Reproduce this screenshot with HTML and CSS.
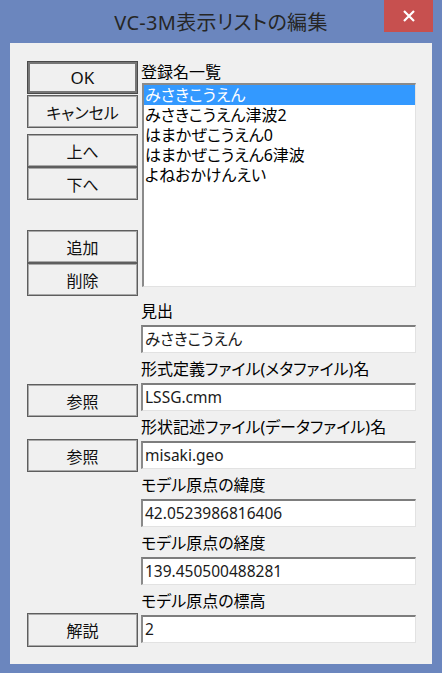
FILE: index.html
```html
<!DOCTYPE html>
<html lang="ja">
<head>
<meta charset="utf-8">
<title>VC-3M表示リストの編集</title>
<link rel="stylesheet" href="styles.css">
</head>
<body>
<div class="window">
  <div class="titlebar">
    <div class="title">VC-3M表示リストの編集</div>
    <div class="close">
      <svg width="12" height="12" viewBox="0 0 12 12"><path d="M1 1 L11 11 M11 1 L1 11" stroke="#fff" stroke-width="2.2" fill="none"/></svg>
    </div>
  </div>
  <div class="client">
    <div class="buttons">
      <div class="btn btn-default">OK</div>
      <div class="btn btn-cancel">キャンセル</div>
      <div class="btn btn-up">上へ</div>
      <div class="btn">下へ</div>
      <div class="btn btn-add">追加</div>
      <div class="btn">削除</div>
      <div class="btn btn-ref1">参照</div>
      <div class="btn btn-ref2">参照</div>
      <div class="btn btn-help">解説</div>
    </div>
    <div class="fields">
      <div class="label label-first">登録名一覧</div>
      <div class="listbox">
        <div class="item selected">みさきこうえん</div>
        <div class="item">みさきこうえん津波2</div>
        <div class="item">はまかぜこうえん0</div>
        <div class="item">はまかぜこうえん6津波</div>
        <div class="item">よねおかけんえい</div>
      </div>
      <div class="label label-after-list">見出</div>
      <div class="input">みさきこうえん</div>
      <div class="label">形式定義ファイル(メタファイル)名</div>
      <div class="input">LSSG.cmm</div>
      <div class="label">形状記述ファイル(データファイル)名</div>
      <div class="input">misaki.geo</div>
      <div class="label">モデル原点の緯度</div>
      <div class="input">42.0523986816406</div>
      <div class="label">モデル原点の経度</div>
      <div class="input">139.450500488281</div>
      <div class="label">モデル原点の標高</div>
      <div class="input">2</div>
    </div>
  </div>
</div>
</body>
</html>
```

FILE: styles.css
```css
html, body {
  margin: 0;
  padding: 0;
}
body {
  width: 442px;
  height: 673px;
  background: #6b86be;
  font-family: "Noto Sans", "Noto Sans CJK JP", sans-serif;
  font-feature-settings: "palt";
  color: #000;
  overflow: hidden;
}
.window {
  width: 442px;
  height: 673px;
  display: flex;
  flex-direction: column;
}
.titlebar {
  height: 43px;
  display: flex;
  align-items: flex-start;
  padding-left: 58px;
  padding-right: 9px;
  box-sizing: border-box;
}
.title {
  flex: 1;
  text-align: center;
  font-size: 20px;
  line-height: 24px;
  padding-top: 11px;
  color: #262626;
  letter-spacing: 0.3px;
}
.close {
  width: 49px;
  height: 32px;
  background: #c7504f;
  display: flex;
  align-items: center;
  justify-content: center;
}
.client {
  margin: 0 10px 0 10px;
  height: 621px;
  background: #f0f0f0;
  display: flex;
  padding: 18px 16px 0 17px;
  box-sizing: border-box;
  gap: 3px;
}
.buttons {
  width: 111px;
  display: flex;
  flex-direction: column;
}
.btn {
  height: 33px;
  box-sizing: border-box;
  border: 1px solid #5e5e5e;
  box-shadow: inset 0 0 0 1px #a9a9a9;
  background: #f0f0f0;
  display: flex;
  align-items: center;
  justify-content: center;
  font-size: 16px;
  color: #111;
}
.btn-default {
  border: 1px solid #4a4a4a;
  box-shadow: inset 0 0 0 2px #767676;
  font-size: 17px;
}
.btn-cancel { margin-top: 1px; }
.btn-up { margin-top: 6px; }
.btn-add { margin-top: 30px; }
.btn-ref1 { margin-top: 88px; }
.btn-ref2 { margin-top: 22px; }
.btn-help { margin-top: 141px; height: 34px; }

.fields {
  width: 275px;
  display: flex;
  flex-direction: column;
}
.label {
  font-size: 16px;
  line-height: 22px;
  height: 22px;
  margin-top: 5px;
  margin-bottom: 3px;
  white-space: nowrap;
}
.label-first {
  margin-top: 0;
  margin-bottom: 0;
}
.label-after-list {
  margin-top: 13px;
}
.listbox {
  height: 204px;
  box-sizing: border-box;
  background: #fff;
  border-top: 2px solid #8a8a8a;
  border-left: 2px solid #8a8a8a;
  border-right: 1px solid #e2e2e2;
  border-bottom: 1px solid #e2e2e2;
  margin-left: 1px;
}
.item {
  height: 20px;
  line-height: 20px;
  font-size: 16px;
  padding-left: 1px;
  white-space: nowrap;
}
.item.selected {
  background: #3399ff;
  color: #fff;
}
.input {
  height: 28px;
  box-sizing: border-box;
  background: #fff;
  border-top: 2px solid #7d7d7d;
  border-left: 2px solid #8a8a8a;
  border-right: 1px solid #e2e2e2;
  border-bottom: 1px solid #e2e2e2;
  padding-left: 2px;
  font-size: 15.5px;
  line-height: 25px;
  color: #1a1a1a;
  white-space: nowrap;
}
```
